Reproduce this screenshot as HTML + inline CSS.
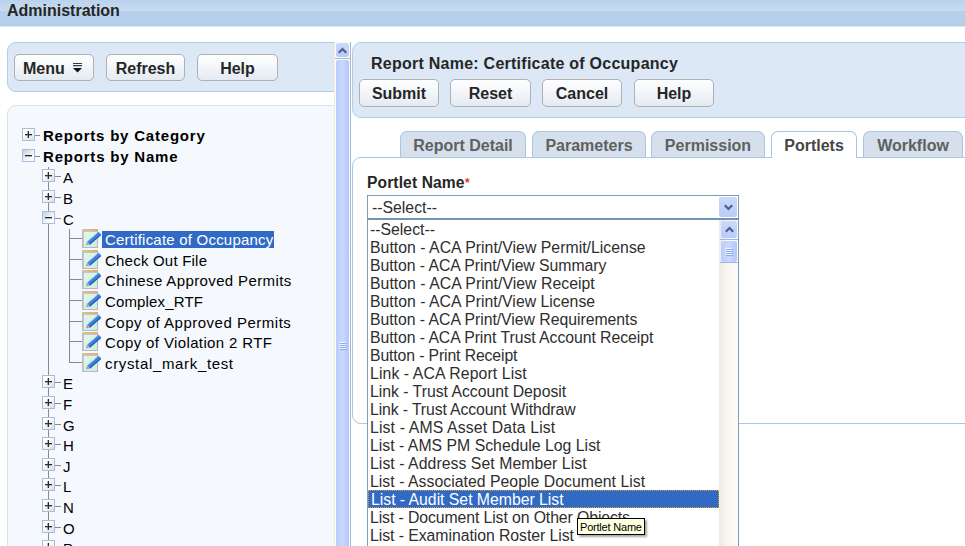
<!DOCTYPE html>
<html><head><meta charset="utf-8">
<style>
*{margin:0;padding:0;box-sizing:border-box}
html,body{width:965px;height:546px;overflow:hidden;background:#fff;font-family:"Liberation Sans",sans-serif;color:#000}
.a{position:absolute}
#hdr{left:0;top:0;width:965px;height:27px;background:linear-gradient(#bad3ec 0,#c8dcf0 11px,#b7d1eb 11px,#b4cfea 26px,#fff 27px)}
#hdr span{position:absolute;left:7px;top:2px;font-weight:bold;font-size:16px;color:#262626}
.pnl{background:#dce8f5;border:1px solid #b3cde8}
.btn{position:absolute;height:27px;border:1px solid #b0b0b0;border-radius:5px;background:linear-gradient(#ffffff,#f3f6fa 45%,#e4eaf2);font-weight:bold;font-size:16px;color:#262626;text-align:center;line-height:27px}
.btn.r{height:28px;line-height:27px}
.sbbtn{position:absolute;background:linear-gradient(#cad9fd,#b9cbf9);border-radius:2px;display:flex;align-items:center;justify-content:center}
.thumb{position:absolute;background:linear-gradient(90deg,#bccdfb,#c9d7fc 50%,#b5c7f8);border-radius:2px;display:flex;align-items:center;justify-content:center}
.tab{position:absolute;top:131px;height:26px;background:#d5e0ec;border:1px solid #a7c6e6;border-bottom:none;border-radius:7px 7px 0 0;font-weight:bold;font-size:16px;color:#606060;text-align:center;line-height:28px}
.tab.on{background:#fff;color:#464646}
.li{position:absolute;left:367px;width:351px;height:18px;font-size:15.8px;line-height:18px;padding-left:3px;padding-top:1px;letter-spacing:0;white-space:nowrap;color:#2e2e2e}
.li.hi{background:#316ac5;color:#fff;outline:1px dotted #e0a030;outline-offset:-1px;left:368px;width:351px;padding-left:3px}
.vl{position:absolute;width:1px;background:#8a8a8a}
.hl{position:absolute;height:1px;background:#8a8a8a}
.bx{position:absolute;width:13px;height:13px;border:1px solid #a6bfdf;background:linear-gradient(135deg,#ffffff 30%,#d9dde6)}
.bx.minus{background:linear-gradient(135deg,#c9ced8,#f4f6f9 60%,#ffffff)}
.bx::before{content:"";position:absolute;left:2px;top:5px;width:7px;height:1px;background:#2a2a2a;box-shadow:0 1px 0 rgba(90,90,90,.45)}
.bx.plus::after{content:"";position:absolute;left:5px;top:2px;width:1px;height:7px;background:#2a2a2a;box-shadow:-1px 0 0 rgba(90,90,90,.45)}
.tb{position:absolute;margin-top:-1px;font-weight:bold;font-size:15px;line-height:17px;letter-spacing:0.66px;white-space:nowrap}
.tr{position:absolute;font-size:15px;line-height:17px;letter-spacing:0.3px;white-space:nowrap;padding-left:3px}
.tr.sel{background:#316ac5;color:#fff;height:17px;width:172px}
.ico{position:absolute}
</style></head><body>
<svg width="0" height="0" style="position:absolute"><defs><g id="ic"><defs><linearGradient id="pg" x1="0" y1="0" x2="1" y2="1"><stop offset="0" stop-color="#e4f7ea"/><stop offset="1" stop-color="#ccefd9"/></linearGradient><linearGradient id="tb" x1="0" y1="0" x2="1" y2="0"><stop offset="0" stop-color="#d6c59a"/><stop offset="1" stop-color="#e6aa66"/></linearGradient></defs><rect x="0.5" y="0.5" width="15" height="18" fill="url(#pg)" stroke="#b3b7cb"/><rect x="0" y="0" width="16" height="2" fill="url(#tb)"/><rect x="1" y="2" width="14" height="1" fill="#c4c6cc"/><rect x="0" y="2" width="2" height="17" fill="#b9bdd0" opacity=".8"/><path d="M6.6 14 L18 4.2" stroke="#3b7edc" stroke-width="4"/><path d="M7.6 15.4 L18.6 5.8" stroke="#2558ac" stroke-width="1.1"/><path d="M5.6 12.6 L16.6 3" stroke="#86bcf4" stroke-width="1"/><path d="M3.8 16.6 L5 12.6 L7.8 15.4 Z" fill="#a49ec6"/></g></defs></svg>
<div id="hdr" class="a"><span>Administration</span></div>

<div class="a pnl" style="left:7px;top:42px;width:340px;height:50px;border-radius:9px 0 0 9px"></div>
<div class="btn" style="left:14px;top:54px;width:80px;text-align:left;padding-left:8px">Menu<svg style="position:absolute;left:58px;top:8px" width="10" height="10" viewBox="0 0 10 10"><rect x="0" y="0" width="9" height="1" fill="#3a3a3a"/><rect x="0" y="2" width="9" height="1" fill="#3a3a3a"/><rect x="0" y="3" width="9" height="1" fill="#c4c8d0"/><path d="M0 5 H9 L4.5 9.5 Z" fill="#111"/></svg></div>
<div class="btn" style="left:106px;top:54px;width:79px">Refresh</div>
<div class="btn" style="left:197px;top:54px;width:81px">Help</div>

<div class="a" style="left:7px;top:105px;width:340px;height:460px;background:#f5f9fd;border:1px solid #d3e3f3;border-radius:9px 0 0 0"></div>
<div class="vl" style="left:48px;top:167px;height:379px"></div>
<div class="vl" style="left:69px;top:229px;height:134px"></div>
<div class="bx plus" style="left:22px;top:128px"></div>
<div class="hl" style="left:35px;top:135px;width:5px"></div>
<div class="tb" style="letter-spacing:0.79px;left:43px;top:128px">Reports by Category</div>
<div class="bx minus" style="left:22px;top:149px"></div>
<div class="hl" style="left:35px;top:156px;width:5px"></div>
<div class="tb" style="letter-spacing:0.8px;left:43px;top:149px">Reports by Name</div>
<div class="bx plus" style="left:42px;top:169px"></div>
<div class="hl" style="left:55px;top:176px;width:6px"></div>
<div class="tr" style="left:60px;top:169px">A</div>
<div class="bx plus" style="left:42px;top:190px"></div>
<div class="hl" style="left:55px;top:197px;width:6px"></div>
<div class="tr" style="left:60px;top:190px">B</div>
<div class="bx minus" style="left:42px;top:211px"></div>
<div class="hl" style="left:55px;top:218px;width:6px"></div>
<div class="tr" style="left:60px;top:211px">C</div>
<div class="hl" style="left:70px;top:238px;width:12px"></div>
<svg class="ico" style="left:82px;top:229px" width="19" height="19"><use href="#ic"/></svg>
<div class="tr sel" style="letter-spacing:0.213px;left:102px;top:231px">Certificate of Occupancy</div>
<div class="hl" style="left:70px;top:259px;width:12px"></div>
<svg class="ico" style="left:82px;top:250px" width="19" height="19"><use href="#ic"/></svg>
<div class="tr" style="letter-spacing:0.215px;left:102px;top:252px">Check Out File</div>
<div class="hl" style="left:70px;top:279px;width:12px"></div>
<svg class="ico" style="left:82px;top:270px" width="19" height="19"><use href="#ic"/></svg>
<div class="tr" style="letter-spacing:0.374px;left:102px;top:272px">Chinese Approved Permits</div>
<div class="hl" style="left:70px;top:300px;width:12px"></div>
<svg class="ico" style="left:82px;top:291px" width="19" height="19"><use href="#ic"/></svg>
<div class="tr" style="letter-spacing:0.15px;left:102px;top:293px">Complex_RTF</div>
<div class="hl" style="left:70px;top:321px;width:12px"></div>
<svg class="ico" style="left:82px;top:312px" width="19" height="19"><use href="#ic"/></svg>
<div class="tr" style="letter-spacing:0.504px;left:102px;top:314px">Copy of Approved Permits</div>
<div class="hl" style="left:70px;top:341px;width:12px"></div>
<svg class="ico" style="left:82px;top:332px" width="19" height="19"><use href="#ic"/></svg>
<div class="tr" style="letter-spacing:0.377px;left:102px;top:334px">Copy of Violation 2 RTF</div>
<div class="hl" style="left:70px;top:362px;width:12px"></div>
<svg class="ico" style="left:82px;top:353px" width="19" height="19"><use href="#ic"/></svg>
<div class="tr" style="letter-spacing:0.656px;left:102px;top:355px">crystal_mark_test</div>
<div class="bx plus" style="left:42px;top:375px"></div>
<div class="hl" style="left:55px;top:382px;width:6px"></div>
<div class="tr" style="left:60px;top:375px">E</div>
<div class="bx plus" style="left:42px;top:396px"></div>
<div class="hl" style="left:55px;top:403px;width:6px"></div>
<div class="tr" style="left:60px;top:396px">F</div>
<div class="bx plus" style="left:42px;top:417px"></div>
<div class="hl" style="left:55px;top:424px;width:6px"></div>
<div class="tr" style="left:60px;top:417px">G</div>
<div class="bx plus" style="left:42px;top:437px"></div>
<div class="hl" style="left:55px;top:444px;width:6px"></div>
<div class="tr" style="left:60px;top:437px">H</div>
<div class="bx plus" style="left:42px;top:458px"></div>
<div class="hl" style="left:55px;top:465px;width:6px"></div>
<div class="tr" style="left:60px;top:458px">J</div>
<div class="bx plus" style="left:42px;top:478px"></div>
<div class="hl" style="left:55px;top:485px;width:6px"></div>
<div class="tr" style="left:60px;top:478px">L</div>
<div class="bx plus" style="left:42px;top:499px"></div>
<div class="hl" style="left:55px;top:506px;width:6px"></div>
<div class="tr" style="left:60px;top:499px">N</div>
<div class="bx plus" style="left:42px;top:520px"></div>
<div class="hl" style="left:55px;top:527px;width:6px"></div>
<div class="tr" style="left:60px;top:520px">O</div>
<div class="bx plus" style="left:42px;top:540px"></div>
<div class="hl" style="left:55px;top:547px;width:6px"></div>
<div class="tr" style="left:60px;top:540px">P</div>

<div class="a" style="left:334px;top:42px;width:17px;height:504px;background:#fdfcf7;border-left:1px solid #efece0"></div>
<div class="a" style="left:350px;top:42px;width:1px;height:504px;background:#a4b8d4"></div>
<div class="sbbtn" style="left:336px;top:43px;width:13px;height:14px"><svg width="9" height="7" viewBox="0 0 9 7"><path d="M0.8 5.8 L4.5 2 L8.2 5.8" fill="none" stroke="#4d6185" stroke-width="2.2"/></svg></div>
<div class="a" style="left:335px;top:58px;width:15px;height:1px;background:#9fb5e4"></div>
<div class="thumb" style="left:336px;top:60px;width:13px;height:560px"><div style="position:absolute;left:3px;top:282px"><svg style="display:block" width="8" height="8" viewBox="0 0 8 8"><path d="M0 0.5H7M0 2.5H7M0 4.5H7M0 6.5H7" stroke="#eef3ff" stroke-width="1"/><path d="M1 1.5H8M1 3.5H8M1 5.5H8M1 7.5H8" stroke="#8cabf0" stroke-width="1"/></svg></div></div>

<div class="a pnl" style="left:352px;top:42px;width:620px;height:76px;border-radius:9px 0 0 9px"></div>
<div class="a" style="left:371px;top:55px;font-weight:bold;font-size:16px;color:#262626;letter-spacing:0.25px">Report Name: Certificate of Occupancy</div>
<div class="btn r" style="left:359px;top:79px;width:80px">Submit</div>
<div class="btn r" style="left:450px;top:79px;width:81px">Reset</div>
<div class="btn r" style="left:542px;top:79px;width:80px">Cancel</div>
<div class="btn r" style="left:634px;top:79px;width:80px">Help</div>

<div class="a" style="left:352px;top:157px;width:620px;height:267px;background:#fff;border:1px solid #a9c7e6;border-radius:9px 0 0 9px"></div>
<div class="tab" style="left:400px;width:126px">Report Detail</div>
<div class="tab" style="left:532px;width:114px">Parameters</div>
<div class="tab" style="left:651px;width:114px">Permission</div>
<div class="tab on" style="left:771px;width:86px;height:27px">Portlets</div>
<div class="tab" style="left:863px;width:100px">Workflow</div>

<div class="a" style="left:367px;top:174px;font-weight:bold;font-size:15.6px;color:#262626;letter-spacing:0.12px">Portlet Name<span style="position:absolute;left:98px;top:2px;color:#e8303a;font-size:12px">*</span></div>

<div class="a" style="left:367px;top:195px;width:372px;height:25px;background:#fff;border:1px solid #7f9db9;border-bottom:2px solid #7393b6"></div>
<div class="li" style="top:197px;left:367px;padding-left:5px;line-height:20px;height:20px">--Select--</div>
<div class="sbbtn" style="left:719px;top:197px;width:18px;height:20px"><svg width="9" height="7" viewBox="0 0 9 7"><path d="M0.8 1.2 L4.5 5 L8.2 1.2" fill="none" stroke="#4d6185" stroke-width="2.2"/></svg></div>

<div class="a" style="left:367px;top:220px;width:372px;height:340px;background:#fff;border:1px solid #7f9db9;border-top:none"></div>
<div class="a" style="left:719px;top:220px;width:19px;height:330px;background:linear-gradient(90deg,#eceae2,#f6f5ef 40%,#fcfbf7)"></div>
<div class="sbbtn" style="left:721px;top:221px;width:16px;height:17px"><svg width="9" height="7" viewBox="0 0 9 7"><path d="M0.8 5.8 L4.5 2 L8.2 5.8" fill="none" stroke="#4d6185" stroke-width="2.2"/></svg></div>
<div class="a" style="left:720px;top:239px;width:18px;height:1px;background:#9fb5e4"></div>
<div class="thumb" style="left:721px;top:241px;width:16px;height:21px"><svg style="display:block" width="8" height="8" viewBox="0 0 8 8"><path d="M0 0.5H7M0 2.5H7M0 4.5H7M0 6.5H7" stroke="#eef3ff" stroke-width="1"/><path d="M1 1.5H8M1 3.5H8M1 5.5H8M1 7.5H8" stroke="#8cabf0" stroke-width="1"/></svg></div>
<div class="a" style="left:720px;top:262px;width:18px;height:1px;background:#9fb5e4"></div>
<div class="li" style="letter-spacing:0px;top:220px">--Select--</div>
<div class="li" style="letter-spacing:0.03px;top:238px">Button - ACA Print/View Permit/License</div>
<div class="li" style="letter-spacing:-0.04px;top:256px">Button - ACA Print/View Summary</div>
<div class="li" style="letter-spacing:0.037px;top:274px">Button - ACA Print/View Receipt</div>
<div class="li" style="letter-spacing:0.02px;top:292px">Button - ACA Print/View License</div>
<div class="li" style="letter-spacing:-0.031px;top:310px">Button - ACA Print/View Requirements</div>
<div class="li" style="letter-spacing:-0.051px;top:328px">Button - ACA Print Trust Account Receipt</div>
<div class="li" style="letter-spacing:-0.129px;top:346px">Button - Print Receipt</div>
<div class="li" style="letter-spacing:0.1px;top:364px">Link - ACA Report List</div>
<div class="li" style="letter-spacing:-0.019px;top:382px">Link - Trust Account Deposit</div>
<div class="li" style="letter-spacing:-0.121px;top:400px">Link - Trust Account Withdraw</div>
<div class="li" style="letter-spacing:0.14px;top:418px">List - AMS Asset Data List</div>
<div class="li" style="letter-spacing:0.013px;top:436px">List - AMS PM Schedule Log List</div>
<div class="li" style="letter-spacing:0.052px;top:454px">List - Address Set Member List</div>
<div class="li" style="letter-spacing:0.032px;top:472px">List - Associated People Document List</div>
<div class="li hi" style="letter-spacing:-0.022px;top:490px">List - Audit Set Member List</div>
<div class="li" style="letter-spacing:-0.094px;top:508px">List - Document List on Other Objects</div>
<div class="li" style="letter-spacing:-0.05px;top:526px">List - Examination Roster List</div>

<div class="a" style="left:577px;top:518px;width:68px;height:17px;background:#ffffe1;border:1px solid #000;font-size:11px;letter-spacing:-0.2px;line-height:16px;padding-left:2px;white-space:nowrap;box-shadow:2px 2px 2px rgba(0,0,0,.35);color:#000">Portlet Name</div>
</body></html>
